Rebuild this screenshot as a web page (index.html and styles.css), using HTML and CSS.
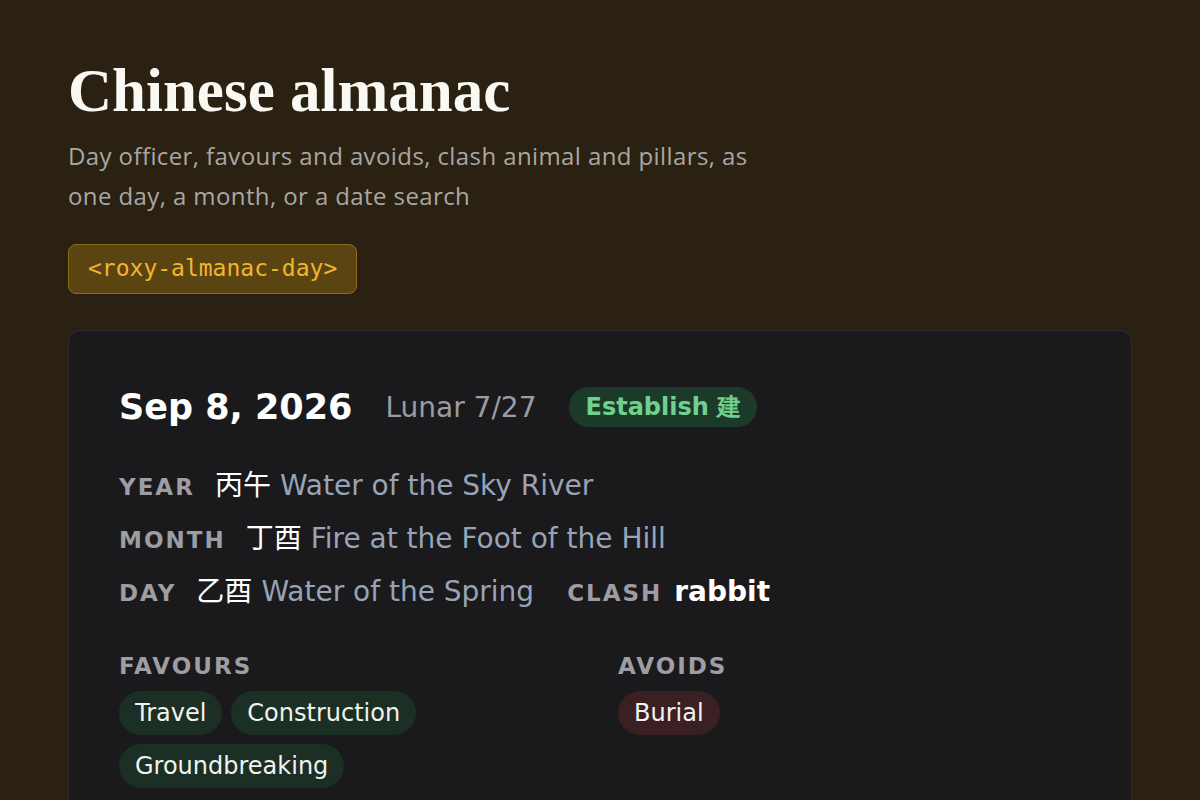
FILE: index.html
```html
<!DOCTYPE html>
<html lang="en">
<head>
    <meta charset="UTF-8">
    <meta name="viewport" content="width=device-width, initial-scale=1.0">
    <title>Chinese almanac</title>
    <link rel="stylesheet" href="styles.css">
</head>
<body>
    <header class="intro">
        <h1>Chinese almanac</h1>
        <p class="lead">Day officer, favours and avoids, clash animal and pillars, as one day, a month, or a date search</p>
        <code class="tag">&lt;roxy-almanac-day&gt;</code>
    </header>

    <section class="card">
        <div class="day-head">
            <span class="date">Sep 8, 2026</span>
            <span class="lunar">Lunar 7/27</span>
            <span class="officer">Establish 建</span>
        </div>

        <div class="pillars">
            <div class="pillar">
                <span class="label">Year</span>
                <span class="han">丙午</span>
                <span class="nayin">Water of the Sky River</span>
            </div>
            <div class="pillar">
                <span class="label">Month</span>
                <span class="han">丁酉</span>
                <span class="nayin">Fire at the Foot of the Hill</span>
            </div>
            <div class="pillar">
                <span class="label">Day</span>
                <span class="han">乙酉</span>
                <span class="nayin">Water of the Spring</span>
                <span class="label clash-label">Clash</span>
                <span class="clash">rabbit</span>
            </div>
        </div>

        <div class="lists">
            <div class="list">
                <div class="label">Favours</div>
                <div class="chips">
                    <span class="chip good">Travel</span>
                    <span class="chip good">Construction</span>
                    <span class="chip good">Groundbreaking</span>
                </div>
            </div>
            <div class="list">
                <div class="label">Avoids</div>
                <div class="chips">
                    <span class="chip bad">Burial</span>
                </div>
            </div>
        </div>
    </section>
</body>
</html>
```

FILE: styles.css
```css
body {
    margin: 0;
    padding: 56px 68px 40px;
    background: #2a2112;
    color: #f2f2f2;
    font-family: "DejaVu Sans", sans-serif;
}
.intro h1 {
    font-family: "Liberation Serif", serif;
    font-size: 61px;
    font-weight: 700;
    line-height: 70px;
    margin: 0 0 10px;
    color: #faf8f2;
}
.lead {
    font-family: "Open Sans", sans-serif;
    font-size: 24px;
    letter-spacing: 0.4px;
    line-height: 40px;
    color: #a9a7a2;
    max-width: 720px;
    margin: 0 0 28px;
}
.tag {
    display: inline-block;
    font-family: "DejaVu Sans Mono", monospace;
    font-size: 23px;
    line-height: 27px;
    padding: 10px 19px 11px;
    color: #f3b52d;
    background: #5a4512;
    border: 1px solid #8e6c1f;
    border-radius: 8px;
}
.card {
    margin-top: 36px;
    background: #1a1a1d;
    border: 1px solid #2d2d31;
    border-radius: 12px;
    padding: 56px 50px 60px;
}
.day-head {
    display: flex;
    align-items: center;
    gap: 33px;
}
.date {
    font-size: 35px;
    font-weight: 700;
    color: #ffffff;
}
.lunar {
    font-size: 28px;
    color: #9c9ca2;
}
.officer {
    font-size: 24px;
    line-height: 28px;
    font-weight: 700;
    color: #6fd18d;
    background: #1c3a29;
    padding: 6px 16px;
    border-radius: 20px;
}
.pillars {
    margin-top: 36px;
    display: flex;
    flex-direction: column;
    gap: 14px;
}
.pillar {
    display: flex;
    align-items: baseline;
    height: 39px;
}
.label {
    font-size: 23px;
    font-weight: 700;
    letter-spacing: 2px;
    text-transform: uppercase;
    color: #9d9da3;
}
.han {
    font-family: "Noto Sans CJK SC", sans-serif;
    font-size: 28px;
    color: #ffffff;
    margin-left: 20px;
    margin-right: 9px;
}
.nayin {
    font-size: 28px;
    color: #98a3b5;
}
.clash-label {
    margin-left: 33px;
}
.clash {
    font-size: 28px;
    font-weight: 700;
    color: #ffffff;
    margin-left: 12px;
}
.lists {
    margin-top: 45px;
    display: grid;
    grid-template-columns: 1fr 1fr;
    gap: 36px;
}
.list .label {
    margin-bottom: 12px;
}
.chips {
    display: flex;
    flex-wrap: wrap;
    gap: 9px;
}
.chip {
    font-size: 24px;
    line-height: 28px;
    padding: 8px 16px;
    border-radius: 22px;
    color: #f2f2ee;
}
.chip.good {
    background: #1b2f24;
}
.chip.bad {
    background: #3a1f23;
}
```
